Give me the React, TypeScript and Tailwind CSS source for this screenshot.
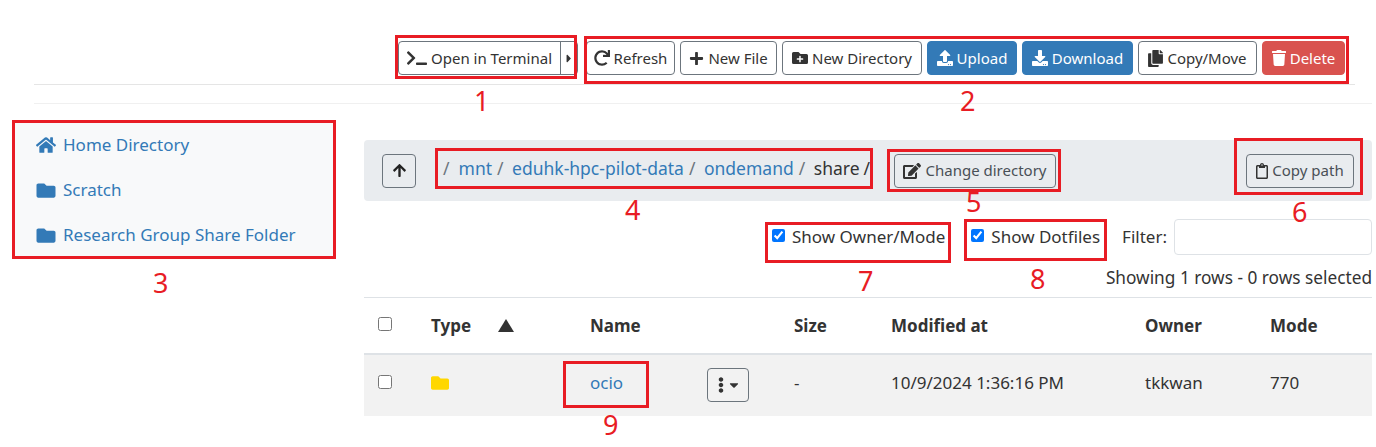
import type { ReactNode } from 'react'
import {
  FaArrowUp,
  FaCaretDown,
  FaCaretRight,
  FaCopy,
  FaDownload,
  FaEdit,
  FaEllipsisV,
  FaFolder,
  FaFolderPlus,
  FaHome,
  FaPlus,
  FaRedo,
  FaRegClipboard,
  FaTerminal,
  FaTrash,
  FaUpload,
} from 'react-icons/fa'

const outline = 'border border-[#6c757d] bg-white text-[#333]'
const blue = 'border border-[#337ab7] bg-[#337ab7] text-white'

function ToolButton({ className, icon, label }: { className: string; icon: ReactNode; label: string }) {
  return (
    <button className={`flex h-[34px] items-center justify-center gap-[4px] rounded text-[15px] ${className}`}>
      {icon}
      {label}
    </button>
  )
}

function SideLink({ icon, label }: { icon: ReactNode; label: string }) {
  return (
    <a className="flex h-[45px] items-center gap-[7px] pl-[22px] text-[#337ab7]">
      {icon}
      {label}
    </a>
  )
}

function Crumb({ label }: { label: string }) {
  return (
    <>
      <a className="text-[#337ab7]">{label}</a>
      <span className="mr-[8.5px] ml-[5px] text-[#6c757d]">/</span>
    </>
  )
}

export default function App() {
  return (
    <div className="relative h-[447px] w-[1376px] overflow-hidden bg-white font-['Noto_Sans',sans-serif] text-[17px] text-[#333]">
      {/* Toolbar */}
      <div className="ml-[34px] h-[85px] w-[1321px] border-b border-[#e5e5e5] pt-[41px]">
        <div className="flex justify-end pr-[10px]">
          <div className="mr-[8px] flex h-[34px] rounded border border-[#6c757d] bg-white text-[15px]">
            <button className="flex w-[161px] items-center gap-[4px] pl-[8px]">
              <FaTerminal className="h-[16px] w-[20px] text-[#333]" />
              Open in Terminal
            </button>
            <button className="flex w-[17px] items-center justify-center border-l border-[#6c757d]">
              <FaCaretRight className="h-[13px] w-[8px]" />
            </button>
          </div>
          <div className="flex gap-[5px]">
            <ToolButton className={`w-[89px] ${outline}`} icon={<FaRedo className="h-[16px] w-[16px]" />} label="Refresh" />
            <ToolButton className={`w-[97px] ${outline}`} icon={<FaPlus className="h-[15px] w-[15px]" />} label="New File" />
            <ToolButton className={`w-[140px] ${outline}`} icon={<FaFolderPlus className="h-[16px] w-[16px]" />} label="New Directory" />
            <ToolButton className={`w-[90px] ${blue}`} icon={<FaUpload className="h-[16px] w-[16px]" />} label="Upload" />
            <ToolButton className={`w-[111px] ${blue}`} icon={<FaDownload className="h-[16px] w-[16px]" />} label="Download" />
            <ToolButton className={`w-[119px] ${outline}`} icon={<FaCopy className="h-[17px] w-[15px]" />} label="Copy/Move" />
            <ToolButton className="w-[83px] border border-[#d9534f] bg-[#d9534f] text-white" icon={<FaTrash className="h-[16px] w-[14px]" />} label="Delete" />
          </div>
        </div>
      </div>
      <div className="mt-[18px] ml-[34px] h-px w-[1338px] bg-[#f0f0f0]" />

      <div className="flex pt-[18px]">
        {/* Favorites */}
        <nav className="mr-[30px] ml-[14px] flex h-[136px] w-[320px] flex-col justify-center bg-[#f8f9fa]">
          <SideLink icon={<FaHome className="h-[18px] w-[20px]" />} label="Home Directory" />
          <SideLink icon={<FaFolder className="h-[19px] w-[20px]" />} label="Scratch" />
          <SideLink icon={<FaFolder className="h-[19px] w-[20px]" />} label="Research Group Share Folder" />
        </nav>

        <div className="w-[1008px] pt-[18px]">
          {/* Path bar */}
          <div className="flex h-[61px] items-center rounded bg-[#e9ecef] pr-[18px] pl-[18px]">
            <button className="flex h-[34px] w-[34px] items-center justify-center rounded border border-[#6c757d] text-[#222]">
              <FaArrowUp className="h-[15px] w-[15px]" />
            </button>
            <div className="ml-[27px] flex w-[451px] items-center pb-[4px] text-[17.5px]">
              <span className="mr-[9px] text-[#6c757d]">/</span>
              <Crumb label="mnt" />
              <Crumb label="eduhk-hpc-pilot-data" />
              <Crumb label="ondemand" />
              <span>share</span>
              <span className="ml-[4px]">/</span>
            </div>
            <button className="flex h-[34px] w-[162px] items-center justify-center gap-[4px] rounded border border-[#6c757d] text-[15px] text-[#495057]">
              <FaEdit className="h-[16px] w-[18px] text-[#333]" />
              Change directory
            </button>
            <button className="ml-auto flex h-[34px] w-[108px] items-center justify-center gap-[4px] rounded border border-[#6c757d] text-[15px] text-[#495057]">
              <FaRegClipboard className="h-[16px] w-[12px] text-[#333]" />
              Copy path
            </button>
          </div>

          {/* Filters */}
          <div className="mt-[18px] flex h-[36px] items-center justify-end">
            <label className="flex items-center gap-[7px]">
              <input type="checkbox" defaultChecked className="mb-[4px] h-[13px] w-[13px] accent-[#0075ff]" />
              Show Owner/Mode
            </label>
            <label className="ml-[26px] flex items-center gap-[7px]">
              <input type="checkbox" defaultChecked className="mb-[4px] h-[13px] w-[13px] accent-[#0075ff]" />
              Show Dotfiles
            </label>
            <span className="mr-[7px] ml-[22px]">Filter:</span>
            <input className="h-[36px] w-[198px] rounded border border-[#dee2e6] bg-white" />
          </div>
          <p className="mt-[11px] mb-[7px] text-right text-[17.25px] leading-[24px]">Showing 1 rows - 0 rows selected</p>

          {/* Files */}
          <table className="w-full table-fixed border-t border-[#dee2e6]">
            <colgroup>
              <col className="w-[53px]" />
              <col className="w-[159px]" />
              <col className="w-[204px]" />
              <col className="w-[97px]" />
              <col className="w-[254px]" />
              <col className="w-[125px]" />
              <col className="w-[116px]" />
            </colgroup>
            <thead>
              <tr className="h-[56px] border-b-[2px] border-[#dee2e6] text-left">
                <th className="pl-[14px]">
                  <input type="checkbox" className="mb-[2px] block h-[14px] w-[14px]" />
                </th>
                <th className="pl-[14px] font-bold">
                  <span className="flex items-center justify-between pr-[62px]">
                    Type
                    <span className="h-0 w-0 border-x-[8px] border-b-[13px] border-x-transparent border-b-[#333]" />
                  </span>
                </th>
                <th className="pl-[14px] font-bold">Name</th>
                <th className="pl-[14px] font-bold">Size</th>
                <th className="pl-[14px] font-bold">Modified at</th>
                <th className="pl-[14px] font-bold">Owner</th>
                <th className="pl-[14px] font-bold">Mode</th>
              </tr>
            </thead>
            <tbody>
              <tr className="h-[62px] bg-[#f2f2f2]">
                <td className="pl-[14px]">
                  <input type="checkbox" className="mb-[7px] block h-[14px] w-[14px]" />
                </td>
                <td className="pl-[14px]">
                  <FaFolder className="mb-[4px] h-[18px] w-[18px] text-[#ffd700]" />
                </td>
                <td className="pl-[14px]">
                  <div className="flex items-center justify-between pr-[31px]">
                    <a className="mb-[4px] text-[#337ab7]">ocio</a>
                    <button className="flex h-[34px] w-[42px] items-center justify-center gap-[5px] rounded border border-[#6c757d] text-[#333]">
                      <FaEllipsisV className="h-[16px] w-[6px]" />
                      <FaCaretDown className="h-[14px] w-[10px]" />
                    </button>
                  </div>
                </td>
                <td className="pb-[4px] pl-[14px]">-</td>
                <td className="pb-[4px] pl-[14px]">10/9/2024 1:36:16 PM</td>
                <td className="pb-[4px] pl-[14px]">tkkwan</td>
                <td className="pb-[4px] pl-[14px]">770</td>
              </tr>
            </tbody>
          </table>
        </div>
      </div>

      {/* Red annotation boxes drawn over the screenshot */}
      <div className="absolute top-[35px] left-[395px] h-[44px] w-[182px] border-[3px] border-[#e81c24]" />
      <div className="absolute top-[36px] left-[584px] h-[48px] w-[765px] border-[3px] border-[#e81c24]" />
      <div className="absolute top-[120px] left-[12px] h-[139px] w-[324px] border-[3px] border-[#e81c24]" />
      <div className="absolute top-[148px] left-[435px] h-[41px] w-[438px] border-[3px] border-[#e81c24]" />
      <div className="absolute top-[149px] left-[887px] h-[43px] w-[174px] border-[3px] border-[#e81c24]" />
      <div className="absolute top-[138px] left-[1234px] h-[57px] w-[129px] border-[3px] border-[#e81c24]" />
      <div className="absolute top-[222px] left-[765px] h-[41px] w-[186px] border-[3px] border-[#e81c24]" />
      <div className="absolute top-[219px] left-[964px] h-[42px] w-[143px] border-[3px] border-[#e81c24]" />
      <div className="absolute top-[361px] left-[563px] h-[47px] w-[86px] border-[3px] border-[#e81c24]" />

      {/* Annotation numbers */}
      <span className="absolute top-[83px] left-[474px] text-[27px] leading-[36px] text-[#e81c24]">1</span>
      <span className="absolute top-[83px] left-[960px] text-[27px] leading-[36px] text-[#e81c24]">2</span>
      <span className="absolute top-[265px] left-[153px] text-[27px] leading-[36px] text-[#e81c24]">3</span>
      <span className="absolute top-[192px] left-[625px] text-[27px] leading-[36px] text-[#e81c24]">4</span>
      <span className="absolute top-[184px] left-[966px] text-[27px] leading-[36px] text-[#e81c24]">5</span>
      <span className="absolute top-[194px] left-[1292px] text-[27px] leading-[36px] text-[#e81c24]">6</span>
      <span className="absolute top-[263px] left-[858px] text-[27px] leading-[36px] text-[#e81c24]">7</span>
      <span className="absolute top-[261px] left-[1030px] text-[27px] leading-[36px] text-[#e81c24]">8</span>
      <span className="absolute top-[407px] left-[603px] text-[27px] leading-[36px] text-[#e81c24]">9</span>
    </div>
  )
}
